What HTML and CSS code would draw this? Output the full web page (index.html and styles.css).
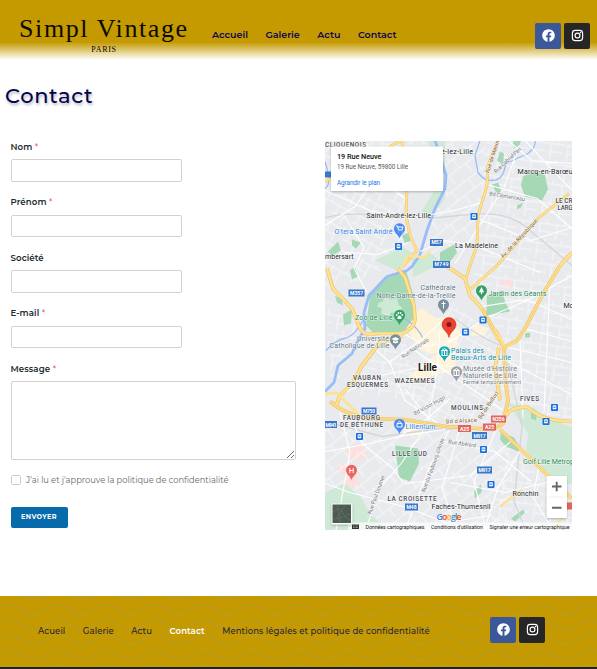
FILE: index.html
```html
<!DOCTYPE html>
<html lang="fr">
<head>
<meta charset="utf-8">
<title>Contact – Simpl Vintage</title>
<link rel="stylesheet" href="styles.css">
</head>
<body>
<svg class="defs" aria-hidden="true">
  <symbol id="fb" viewBox="0 0 512 512"><path d="M504 256C504 119 393 8 256 8S8 119 8 256c0 123.78 90.69 226.38 209.25 245V327.69h-63V256h63v-54.64c0-62.15 37-96.48 93.67-96.48 27.14 0 55.52 4.84 55.52 4.84v61h-31.28c-30.8 0-40.41 19.12-40.41 38.73V256h68.78l-11 71.69h-57.78V501C413.31 482.38 504 379.78 504 256z"/></symbol>
  <symbol id="ig" viewBox="0 0 24 24"><rect x="2.6" y="2.6" width="18.8" height="18.8" rx="5.2" fill="none" stroke="currentColor" stroke-width="2.2"/><circle cx="12" cy="12" r="4.5" fill="none" stroke="currentColor" stroke-width="2.2"/><circle cx="17.5" cy="6.5" r="1.4"/></symbol>
</svg>
<header class="header">
  <a class="logo"><span class="logo-name">Simpl Vintage</span><span class="logo-city">PARIS</span></a>
  <nav class="nav"><a>Accueil</a><a>Galerie</a><a>Actu</a><a>Contact</a></nav>
  <div class="social"><a class="fb"><svg><use href="#fb"/></svg></a><a class="ig"><svg><use href="#ig"/></svg></a></div>
</header>
<h1 class="title">Contact</h1>
<main class="main">
  <form class="form">
    <label class="field"><span class="label">Nom <i>*</i></span><input type="text"></label>
    <label class="field"><span class="label">Prénom <i>*</i></span><input type="text"></label>
    <label class="field"><span class="label">Société</span><input type="text"></label>
    <label class="field"><span class="label">E-mail <i>*</i></span><input type="text"></label>
    <label class="field"><span class="label">Message <i>*</i></span><textarea></textarea></label>
    <label class="consent"><span class="box"></span><span>J'ai lu et j'approuve la politique de confidentialité</span></label>
    <button type="button" class="send">ENVOYER</button>
  </form>
  <svg class="map" viewBox="325 140.5 247 389.5">
    <defs>
      <pattern id="sa" width="23" height="19" patternUnits="userSpaceOnUse" patternTransform="rotate(28)"><path d="M0 3H23M0 12H14M5 0V12M14 3V19M20 0V3"/></pattern>
      <pattern id="sb" width="21" height="25" patternUnits="userSpaceOnUse" patternTransform="rotate(-38)"><path d="M0 4H21M0 15H21M7 4V15M15 15V25M3 0V4"/></pattern>
      <pattern id="sc" width="17" height="20" patternUnits="userSpaceOnUse" patternTransform="rotate(8)"><path d="M0 5H17M5 5V20M12 0V5M5 13H17"/></pattern>
      <g id="bus"><rect x="-3.5" y="-3.5" width="7" height="7" rx="1" fill="#1a6fe0"/><rect x="-1.8" y="-2.2" width="3.6" height="4" rx=".6" fill="#fff"/><path d="M-1.2-.3H1.2" stroke="#1a6fe0" stroke-width="1"/></g>
      <path id="pin" d="M0 9C-1 5-5.5 3.5-5.5-.8A5.5 5.5 0 0 1 5.5-.8C5.5 3.5 1 5 0 9Z"/>
    </defs>
    <path fill="#e8eaed" d="M325 140h247v390H325z"/>
    <g class="quarters">
      <path d="M404 316l18-8 14 10 16-3 9 14-5 17-24 8-14-6-10-18zM434 355l20-4 3 18-24 6-17 10-8-9zM475 324l14 4-5 8-14-1zM400 426l18 2 4 7-18-1z"/>
    </g>
    <g class="hospital"><path d="M346 449l15-6 7 10-8 8-13-4zM345 476l12-3 3 12-12 3-8-6zM361 506l10 2-2 7-9-2zM500 281l14-3-2 9-12-1zM340 461l10 8-5 6-8-7z"/></g>
    <g class="minor">
      <path fill="url(#sa)" d="M325 140h78l4 100-30 35-52 15zM450 300l55 45-2 80-80-9-23-30z"/>
      <path fill="url(#sb)" d="M405 140h82l-8 100-32 25-28-10 22-80zM325 425l120 5 70 20-10 80H325z"/>
      <path fill="url(#sc)" d="M487 140h85v110l-65 94-34-54zM509 348l63-80v150l-67-8zM325 295l35 35-28 65zM500 435l72 73v22h-80zM375 345l30-5 20 60-70-5z"/>
    </g>
    <g class="pale">
      <path d="M508 403l25 4 18 12 21 8v56l-16 2-30-35 2-17zM325 492l20-9 16 14 10 18 22 15h-68zM412 258l20-5 9 10-28 14zM428 140h17v58l-15 20-8-8 15-24zM375 260l28-14 12 9-18 15z"/>
    </g>
    <g class="green">
      <path d="M406 270l-18 5-18 21-4 29 8 8 30-2 10-14 1-17zM395 445l23 3 1 15-9 18-11-4zM487 295l15-5 3 11 5 10-24 4zM523 176l12-6 10 5 3 14-6 11-17-4-4-11zM350 270l5-4 3 10-6 3zM335 295l7 4 1 6-6-3zM343 314l9-5-1 14-7 2zM328 251l10-10 3 9-9 5zM352 239l9 3-5 6-4-3zM492 184l6-2 3 7 1 5-6-2zM517 205l6-3-2 5-4 2zM500 151l4 2-1 11-6-4zM513 141l8-1-2 6-5 2zM501 432l13 5 6 10-2 4-12-5-6-7zM474 491l7-7 1 7-7 7zM511 518l12-9 2 3-10 9zM531 407l6 5-1 8-5-2zM440 252l14-8 3 8-9 12-8 2zM402 235l7-3 2 8-6 3zM525 333l5-1v5h-5z"/>
    </g>
    <path d="M379 302l4-1 1-5 6 3 7-1 2 7 3 2-3 6-8-1-3 6-4-4-3-1 1-5-5-2z" fill="#ceead6"/>
    <path class="rail" d="M325 217c35-9 80 3 114 0s66-11 91 13l42 35M325 421l57 15 50-7 70-3M455 318q28 21 49 28l18 80-8 75 12 29"/>
    <g class="water"><path d="M435 140l6 18 5 17-1 13-10 20-8 22-7 24-8 12-5 4-20 6-18 19-5 17 1 16-8 14-5 11-14 12-4 17-9 9"/><path class="thin" d="M480 140l-5 15 3 17c5 7 9 8 14 8 10 0 12-8 14-17l22-10q8-6 7-13M364 318q-9 18-20 20-9 2-18 12M405 318q14 10 18 20M325 161q8 25-1 27"/></g>
    <g class="streets">
      <path d="M325 225l30-19 25-35 18-31M325 190l45 20 39 8 45-8 28-8M365 140l20 42 21 17M325 260l23-8 30 2 30-12M342 212l22 35-10 21 13 24M420 251l25-11 30 5 65 27M478 218l53 22 41-13M487 184l50 14 35 30M525 140l47 50M519 145l-15 42-20 31-29 45M508 140l24 20 40 3M572 275l-45 25-40 17-46 30M482 306l45-7 45 20M525 328l47 13M508 347l64 15M506 360l66 34M520 340l3 77M550 280l-6 132M405 334l23 12 30-8M389 362l31-22 25-22M370 344l20 18 15 38 40 28M340 394l45-20 50-10 71 9M415 350l31 21 56 38M440 330l-3 40-9 50M325 451l40-7 40-9 40-6M325 483l25 9 57 15 39 15 45-7M366 530l12-40 24-28 21-32M405 530l24-62 20-38M430 420l-25-32M450 398l-26 23-25 15M445 441l50 10 36 30M460 428l-18 60 15 42M496 429l-22 52 12 49M512 440l-42 35-65 8M520 451l-22 36-14 43M555 480l-50 12-55-10M352 420l10 23 30 24 12 16M336 530l14-78-10-40M540 460l-7 37 20 33"/>
    </g>
    <g class="case">
      <path d="M402 140l1 28 4 20-1 27 4 20 7 15-15 17M498 140l-10 25-1 20-9 30-1 30-7 20-4 13M569 193l-31 25-41 47-28 25M389 147q10-7 14-7M325 182q20-16 25-26"/>
      <path class="wide" d="M327 268l6 20 19 20 8 20q5 8 16 5h26q12-5 13-14l-1-14-9-28-7-9M402 335l-22 7-18 23-9 17-13 13-4 11M443 263l22 15 5 17 12 13 13 24 9 15 1 28 3 25-5 23-10 6-47-3-42-7-37-1q-22-4-37-17M572 252l-12 13-18 30-17 33-8 12-13 7-9-18M500 429l22 21 33 32 17 16M504 418q6-13 24-11 14 14 44 14M499 347l-4 20 5 33"/>
    </g>
    <g class="roads">
      <path d="M402 140l1 28 4 20-1 27 4 20 7 15-15 17M498 140l-10 25-1 20-9 30-1 30-7 20-4 13M569 193l-31 25-41 47-28 25M389 147q10-7 14-7M325 182q20-16 25-26"/>
      <path class="wide" d="M327 268l6 20 19 20 8 20q5 8 16 5h26q12-5 13-14l-1-14-9-28-7-9M402 335l-22 7-18 23-9 17-13 13-4 11M443 263l22 15 5 17 12 13 13 24 9 15 1 28 3 25-5 23-10 6-47-3-42-7-37-1q-22-4-37-17M572 252l-12 13-18 30-17 33-8 12-13 7-9-18M500 429l22 21 33 32 17 16M504 418q6-13 24-11 14 14 44 14M499 347l-4 20 5 33M495 339l5-3 4 11 11-5M325 394q12-4 15 2l18 17M402 267l6-12 17 2 5-6M500 506l22-17M553 530l19-28"/>
      <path class="center" d="M482 308l13 24 9 15 1 28 3 25-5 23-10 6-47-3-42-7-37-1q-22-4-37-17M560 265l-18 30-17 33-8 12-13 7M500 429l22 21 33 32 17 16"/>
    </g>
    <g class="shields">
      <g class="blue"><path d="M430 238.500h13v7h-13zM433 260.500h17v7h-17zM348.500 289h16v7h-16zM361.500 407h15v7h-15zM325 420.500h12v7h-12zM472 431.500h15v7h-15zM477 466h15v7h-15zM405 503h13v7h-13zM325 171h6v6h-6z"/><path class="red" d="M491 415h15v7h-15zM458 424.500h13v7h-13zM483 423h13v7h-13zM566 502h6v7h-6z"/></g>
      <text x="431.500" y="243.800" textLength="10">M57</text><text x="434.500" y="265.900" textLength="14">M749</text><text x="350" y="294.400" textLength="13">M357</text><text x="363" y="412.400" textLength="12">M750</text><text x="325.500" y="426" textLength="11">M941</text><text x="473.500" y="437" textLength="12">M917</text><text x="478.500" y="471.500" textLength="12">M917</text><text x="406.500" y="508.500" textLength="10">M48</text><text x="492.500" y="420.500" textLength="12">N356</text><text x="460" y="430" textLength="9">A25</text><text x="485" y="428.500" textLength="9">A25</text>
    </g>
    <use href="#bus" x="398.500" y="246"/><use href="#bus" x="474" y="216"/><use href="#bus" x="483" y="319.500"/><use href="#bus" x="465.500" y="331.500"/><use href="#bus" x="359.500" y="436"/><use href="#bus" x="554.500" y="407"/><use href="#bus" x="546" y="421"/><use href="#bus" x="483.500" y="449"/><use href="#bus" x="491" y="484"/>
    <g class="pins">
      <use href="#pin" x="399.500" y="229" fill="#4a8af4"/><use href="#pin" x="481.500" y="291" fill="#34a065"/><use href="#pin" x="399.500" y="315.500" fill="#34a065"/><use href="#pin" x="443.500" y="305" fill="#78909c"/><use href="#pin" x="395.500" y="340" fill="#78909c"/><use href="#pin" x="444.500" y="352" fill="#12a9b8"/><use href="#pin" x="456.500" y="372" fill="#9aa0a6"/><use href="#pin" x="399.500" y="424.500" fill="#4a8af4"/><use href="#pin" x="351.500" y="470.500" fill="#f06360"/>
      <path class="glyph" d="M396 225.500h1.500l1 4h3.500l1-3h-5M398.500 231.500h.5M402 231.500h.5M443.500 301v7M441.500 303h4M349.800 467.500v5M353.200 467.500v5M349.800 470h3.400M397 423h5v3.500h-5zM398.200 423c0-3 2.600-3 2.600 0M442 354.500v-4M444.500 354.500v-4M447 354.500v-4M441.500 350l3-2 3 2zM441.500 355h6M454 374.500v-4M456.500 374.500v-4M459 374.500v-4M453.500 370l3-2 3 2zM453.500 375h6"/>
      <path fill="#fff" d="M481.500 286.500l2.600 5.200h-2v2h-1.200v-2h-2zM399.500 315c1.500 0 3 3 1.500 3.500h-3c-1.500-.5 0-3.500 1.500-3.500M391.500 338.500l4-2 4 2-4 2zM393 340v2l2.500 1 2.500-1v-2l-2.500 1.200z"/><g fill="#fff"><circle cx="396.700" cy="314.500" r=".9"/><circle cx="398.400" cy="312.500" r=".9"/><circle cx="400.600" cy="312.500" r=".9"/><circle cx="402.300" cy="314.500" r=".9"/></g>
      <path fill="#ea4335" stroke="#c5221f" stroke-width=".5" d="M449 337c-1-6-7-7.500-7-13a7 7 0 0 1 14 0c0 5.500-6 7-7 13z"/><circle cx="449" cy="324" r="2.500" fill="#8c1612"/>
    </g>
    <g class="names">
      <g class="area"><text x="325" y="146.500" textLength="41">CLIQUENOIS</text><text x="555.500" y="202.500" textLength="17">LE CR</text><text x="557.500" y="209.200" textLength="15">LARG</text><text x="353" y="379.500" textLength="28">VAUBAN</text><text x="347" y="386.200" textLength="41">ESQUERMES</text><text x="394.500" y="382" textLength="40">WAZEMMES</text><text x="451" y="409" textLength="32">MOULINS</text><text x="343" y="419.500" textLength="37">FAUBOURG</text><text x="340" y="426.200" textLength="43">DE BÉTHUNE</text><text x="520" y="400" textLength="19">FIVES</text><text x="392" y="455.500" textLength="35">LILLE SUD</text><text x="387.500" y="500.500" textLength="49">LA CROISETTE</text></g>
      <g class="town"><text x="441" y="153.500" textLength="32">e-lez-Lille</text><text x="366.500" y="217.500" textLength="64.500">Saint-André-lez-Lille</text><text x="517.500" y="173" textLength="57">Marcq-en-Barœul</text><text x="455" y="247" textLength="43">La Madeleine</text><text x="325" y="258" textLength="28.500">mbersart</text><text x="563.500" y="307" textLength="10">Mo</text><text x="512.500" y="495.500" textLength="26">Ronchin</text><text x="431.500" y="508.500" textLength="59">Faches-Thumesnil</text></g>
      <text class="city" x="418" y="370" textLength="19">Lille</text>
      <g class="poi"><text fill="#377fe0" x="334.500" y="233.500" textLength="58">O'tera Saint André</text><text fill="#278a56" x="488.500" y="295.500" textLength="58">Jardin des Géants</text><text fill="#278a56" x="355" y="319.500" textLength="37.500">Zoo de Lille</text><text x="420.500" y="289.500" textLength="35">Cathédrale</text><text x="376.500" y="297" textLength="79">Notre-Dame-de-la-Treille</text><text x="357" y="340" textLength="32">Université</text><text x="329.500" y="347.300" textLength="60">Catholique de Lille</text><text fill="#158d9e" x="451" y="352.500" textLength="33">Palais des</text><text fill="#158d9e" x="451" y="359.700" textLength="60">Beaux-Arts de Lille</text><text fill="#777c82" x="463" y="370" textLength="54">Musée d'Histoire</text><text fill="#777c82" x="463" y="377.200" textLength="54">Naturelle de Lille</text><text class="small" fill="#777c82" x="463" y="383" textLength="58">Fermé temporairement</text><text fill="#377fe0" x="405.500" y="428" textLength="30">Lillenium</text><text fill="#278a56" x="523" y="463.500" textLength="51">Golf Lille Métrop</text></g>
      <g class="way"><text fill="#80542f" textLength="34" transform="translate(489 173) rotate(-72)">Rue de Menin</text><text textLength="35" transform="translate(496 173) rotate(-43)">Rue Gabriel Péri</text><text textLength="36" transform="translate(489 195) rotate(9)">Bd Clemenceau</text><text fill="#80542f" textLength="51" transform="translate(503 258) rotate(-47)">Av. de la République</text><text textLength="32" transform="translate(403 358) rotate(-34)">Rue Nationale</text><text textLength="35" transform="translate(415 415) rotate(-29)">Bd Victor Hugo</text><text fill="#80542f" textLength="31" transform="translate(446 423) rotate(-3)">Bd d'Alsace</text><text fill="#80542f" textLength="32" transform="translate(481 419) rotate(-56)">Bd de Belfort</text><text textLength="28" transform="translate(448 443) rotate(8)">Rue Abélard</text><text textLength="41" transform="translate(371 514) rotate(-70)">Rue Paul Doumer</text><text textLength="57" transform="translate(425 492) rotate(-70)">Rue du Faubourg d'Arras</text></g>
    </g>
    <path class="shadow" fill="#fff" d="M331 146h112v44.500H331z"/>
    <g class="card"><text class="card-title" x="337" y="158" textLength="44.500">19 Rue Neuve</text><text fill="#5b5b5b" x="337" y="168.500" textLength="71">19 Rue Neuve, 59800 Lille</text><text fill="#1a73e8" x="337" y="184" textLength="43">Agrandir le plan</text></g>
    <path fill="#fff" opacity=".7" d="M348 522h224v8H348z"/>
    <g class="credit"><path fill="#333" d="M352 524h7v4.500h-7z"/><path stroke="#fff" stroke-width=".6" stroke-dasharray=".8 .7" d="M353 525.500h5M353 527h5"/><text x="365.500" y="528.200" textLength="59">Données cartographiques</text><text x="431" y="528.200" textLength="52">Conditions d'utilisation</text><text x="489.500" y="528.200" textLength="80">Signaler une erreur cartographique</text></g>
    <text class="google" x="436.500" y="519.500" textLength="25"><tspan fill="#4285f4">G</tspan><tspan fill="#ea4335">o</tspan><tspan fill="#fbbc05">o</tspan><tspan fill="#4285f4">g</tspan><tspan fill="#34a853">l</tspan><tspan fill="#ea4335">e</tspan></text>
    <path class="shadow" fill="#fff" d="M331.500 503h21v21h-21z"/><path fill="#4c5c50" d="M332.500 504h18.500v18.500h-18.500z"/><path fill="none" stroke="#74796f" stroke-width=".5" d="M333 511l7-3 5 8 5-3M337 504l4 18M345 505l-8 12 3 5M333 519l12-3 6 4"/>
    <rect class="shadow" fill="#fff" x="546.500" y="475.500" width="20.500" height="42" rx="1"/><path stroke="#e6e6e6" stroke-width=".6" d="M549 496.500h15.500"/><path stroke="#666" stroke-width="1.900" d="M552 486h9.500M556.700 481.300v9.500M552 507.300h9.500"/>
  </svg>
</main>
<footer class="footer">
  <svg class="waves"><defs><pattern id="wave" width="48.330" height="15" patternUnits="userSpaceOnUse" x="10" y="7.500"><path d="M-24.165 11.500C-14 11.500-10.165 1 0 1S14 11.500 24.165 11.500 38.165 1 48.330 1s14 10.500 24.165 10.500"/></pattern></defs><rect width="100%" height="100%" fill="url(#wave)"/></svg>
  <nav class="nav foot-nav"><a>Acueil</a><a>Galerie</a><a>Actu</a><a class="current">Contact</a><a class="legal">Mentions légales et politique de confidentialité</a></nav>
  <div class="social"><a class="fb"><svg><use href="#fb"/></svg></a><a class="ig"><svg><use href="#ig"/></svg></a></div>
</footer>
</body>
</html>
```
FILE: styles.css
```css
* { box-sizing: border-box; }
body { margin: 0; height: 669px; overflow: hidden; display: flex; flex-direction: column; background: #fff; font-family: Montserrat, Inter, sans-serif; }
.defs { position: absolute; width: 0; height: 0; }

.header { height: 60px; flex: none; display: flex; align-items: flex-start; padding: 0 7px 0 19px; background: linear-gradient(#c49a00 0, #c49a00 42px, #fff 60px); }
.logo { width: 193px; flex: none; padding-top: 12px; display: flex; flex-direction: column; color: #0c0a00; font-family: "Liberation Serif", serif; }
.logo-name { height: 33px; line-height: 33px; font-size: 26px; letter-spacing: 1.6px; white-space: nowrap; }
.logo-city { width: 170px; text-align: center; font-size: 8px; line-height: 10px; letter-spacing: .7px; }
.nav { display: flex; white-space: nowrap; gap: 17.5px; color: #0c0850; font-weight: 600; font-size: 9.5px; line-height: 14px; letter-spacing: 0; }
.header .nav { padding-top: 28px; }
.social { display: flex; gap: 3px; }
.header .social { margin-left: auto; margin-top: 22.500px; }
.social a { width: 26px; height: 26px; border-radius: 2px; display: flex; align-items: center; justify-content: center; color: #fff; }
.social svg { width: 13px; height: 13px; fill: currentColor; }
.fb { background: #3b5998; }
.ig { background: #262626; }

.title { margin: 21px 0 0 5px; height: 30px; line-height: 30px; flex: none; font-size: 21px; font-weight: 500; letter-spacing: .65px; color: #04044f; text-shadow: 1px 2px 3px rgba(0,0,0,.3); }
.main { display: flex; margin-top: 29.500px; padding-left: 10.500px; height: 455.500px; flex: none; }
.form { width: 314.500px; display: flex; flex-direction: column; align-items: flex-start; }
.field { display: flex; flex-direction: column; margin-bottom: 14.500px; }
.label { height: 12px; margin-bottom: 6.500px; line-height: 12px; font-size: 8.600px; font-weight: 600; color: #222c30; letter-spacing: .1px; }
.label i { color: #e03838; font-style: normal; font-weight: 400; }
.field input, .field textarea { display: block; margin: 0; padding: 2px; border: 1px solid #d2d2d2; border-radius: 2px; background: #fff; }
.field input { width: 171.500px; height: 22.500px; }
.field textarea { width: 285.500px; height: 79px; }
.consent { display: flex; align-items: center; height: 12px; margin-top: -1px; font-size: 8.300px; color: #666; white-space: nowrap; }
.box { width: 10px; height: 10px; border: 1px solid #ccc; border-radius: 1.500px; margin-right: 5.500px; }
.send { margin: 21px 0 0; width: 57px; height: 21.500px; padding: 0; border: 0; border-radius: 2px; background: #066aab; color: #fff; font: 700 6.500px Montserrat, Inter, sans-serif; letter-spacing: .4px; }

.map { width: 247px; height: 389.500px; flex: none; display: block; font-family: Roboto, sans-serif; }
.map pattern path { fill: none; stroke: #fafbfc; stroke-width: .8; }
.quarters { fill: #fef3d9; }
.hospital { fill: #fbe0df; }
.pale { fill: #cfe9d7; }
.green { fill: #a5d9b5; }
.rail, .water, .streets, .case, .roads { fill: none; stroke-linejoin: round; }
.rail { stroke: #d3d6da; stroke-width: 1.300; }
.water { stroke: #9abcf7; stroke-width: 2.800; }
.water .thin { stroke-width: 1.300; }
.streets { stroke: #fff; stroke-width: 1.100; }
.case { stroke: #f0bd58; stroke-width: 2.800; }
.case .wide { stroke-width: 3.700; }
.roads { stroke: #fde293; stroke-width: 1.900; }
.roads .wide { stroke-width: 2.600; }
.roads .center { stroke: #f4c766; stroke-width: .7; }
.shields .blue { fill: #3877c9; }
.shields .red { fill: #e26461; }
.shields text { fill: #fff; font-size: 5px; font-weight: 700; }
.glyph { fill: none; stroke: #fff; stroke-width: 1; }
.names text { paint-order: stroke; stroke: rgba(255,255,255,.7); stroke-width: 1.100px; }
.area { fill: #4a4d52; font-size: 6.400px; font-weight: 500; }
.town { fill: #242629; font-size: 7.100px; }
.city { fill: #151515; font-size: 10px; font-weight: 700; }
.poi { fill: #607681; font-size: 7.100px; }
.poi .small { font-size: 5.600px; }
.way { fill: #71767d; font-size: 5.600px; }
.card { font-size: 6.300px; }
.card-title { font-size: 7.300px; font-weight: 500; fill: #111; }
.credit { fill: #222; font-size: 5.300px; }
.google { font: 600 8.500px "Open Sans", sans-serif; }
.shadow { filter: drop-shadow(0 1px 1px rgba(0,0,0,.25)); }

.footer { position: relative; height: 73px; flex: none; display: flex; align-items: flex-start; padding-left: 38px; background: #c49a00; border-bottom: 2px solid #222; }
.waves { position: absolute; inset: 0; width: 100%; height: 100%; }
.waves path { fill: none; stroke: #b59d2c; stroke-width: 1.200; }
.foot-nav { position: relative; padding-top: 28px; width: 452px; color: #292536; font-weight: 500; font-size: 8.500px; letter-spacing: .1px; }
.foot-nav .current { color: #fff; font-weight: 600; }
.footer .social { position: relative; margin-top: 20.500px; }
```
